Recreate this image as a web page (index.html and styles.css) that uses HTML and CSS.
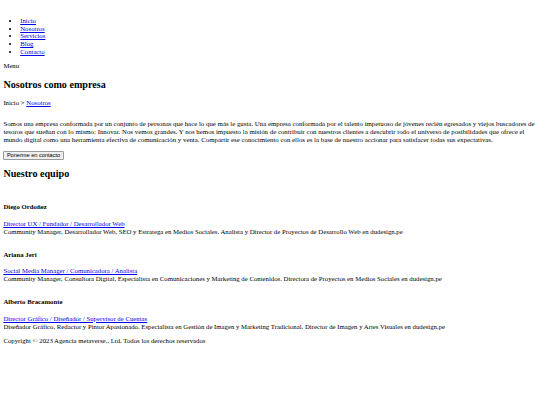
FILE: index.html
```html
<!DOCTYPE html>
<html lang="es">
<head>
<meta charset="utf-8">
<title>Nosotros</title>
<link rel="stylesheet" href="styles.css">
</head>
<body>
<header class="site-header">
  <nav class="main-nav">
    <ul>
      <li><a href="#">Inicio</a></li>
      <li><a href="#">Nosotros</a></li>
      <li><a href="#">Servicios</a></li>
      <li><a href="#">Blog</a></li>
      <li><a href="#">Contacto</a></li>
    </ul>
  </nav>
  <div class="menu-toggle">Menu</div>
</header>
<main>
  <section class="about">
    <h2>Nosotros como empresa</h2>
    <p class="breadcrumb">Inicio &gt; <a href="#">Nosotros</a></p>
    <p class="intro">Somos una empresa conformada por un conjunto de personas que hace lo que más le gusta. Una empresa conformada por el talento impetuoso de jóvenes recién egresados y viejos buscadores de tesoros que sueñan con lo mismo: Innovar. Nos vemos grandes. Y nos hemos impuesto la misión de contribuir con nuestros clientes a descubrir todo el universo de posibilidades que ofrece el mundo digital como una herramienta efectiva de comunicación y venta. Compartir ese conocimiento con ellos es la base de nuestro accionar para satisfacer todas sus expectativas.</p>
    <div class="cta"><button type="button">Ponerme en contacto</button></div>
  </section>
  <section class="team">
    <h2>Nuestro equipo</h2>
    <div class="member first">
      <h4>Diego Ordoñez</h4>
      <p><a href="#">Director UX / Fundador / Desarrollador Web</a><br>Community Manager, Desarrollador Web, SEO y Estratega en Medios Sociales. Analista y Director de Proyectos de Desarrollo Web en dudesign.pe</p>
    </div>
    <div class="member">
      <h4>Ariana Jeri</h4>
      <p><a href="#">Social Media Manager / Comunicadora / Analista</a><br>Community Manager, Consultora Digital, Especialista en Comunicaciones y Marketing de Contenidos. Directora de Proyectos en Medios Sociales en dudesign.pe</p>
    </div>
    <div class="member">
      <h4>Alberto Bracamonte</h4>
      <p><a href="#">Director Gráfico / Diseñador / Supervisor de Cuentas</a><br>Diseñador Gráfico, Redactor y Pintor Apasionado. Especialista en Gestión de Imagen y Marketing Tradicional. Director de Imagen y Artes Visuales en dudesign.pe</p>
    </div>
  </section>
</main>
<footer class="site-footer">
  <p>Copyright © 2023 Agencia metaverse., Ltd. Todos los derechos reservados</p>
</footer>
</body>
</html>
```

FILE: styles.css
```css
html {
  background: #fff;
}
body {
  margin: 3.375px;
  font-family: "Liberation Serif", "Times New Roman", serif;
  font-size: 6.75px;
  line-height: 1.15;
  color: #000;
}
a {
  color: #0000ee;
}
.site-header {
  padding-top: 6.75px;
}
.main-nav ul {
  margin: 6.75px 0;
  padding-left: 16.875px;
}
.about h2,
.team h2 {
  font-size: 10.125px;
  margin: 8.4px 0;
}
.breadcrumb {
  margin: 6.75px 0;
}
.intro {
  font-size: 6.85px;
  line-height: 8px;
  margin: 13.6px 0 6.75px;
}
.cta {
  line-height: 9px;
}
.cta button {
  font-family: "Liberation Sans", Arial, sans-serif;
  font-size: 5.625px;
  line-height: 6px;
  padding: 0.5px 2.5px;
  margin: 0;
  border: 1px solid #9a9a9a;
  border-radius: 1px;
  background: #efefef;
  color: #000;
  vertical-align: top;
}
.member {
  margin-top: 15.2px;
}
.member.first {
  margin-top: 23.6px;
}
.member h4 {
  font-size: 6.75px;
  margin: 0 0 8.98px;
}
.member p {
  margin: 0;
}
.site-footer p {
  margin: 6.75px 0;
}
```
